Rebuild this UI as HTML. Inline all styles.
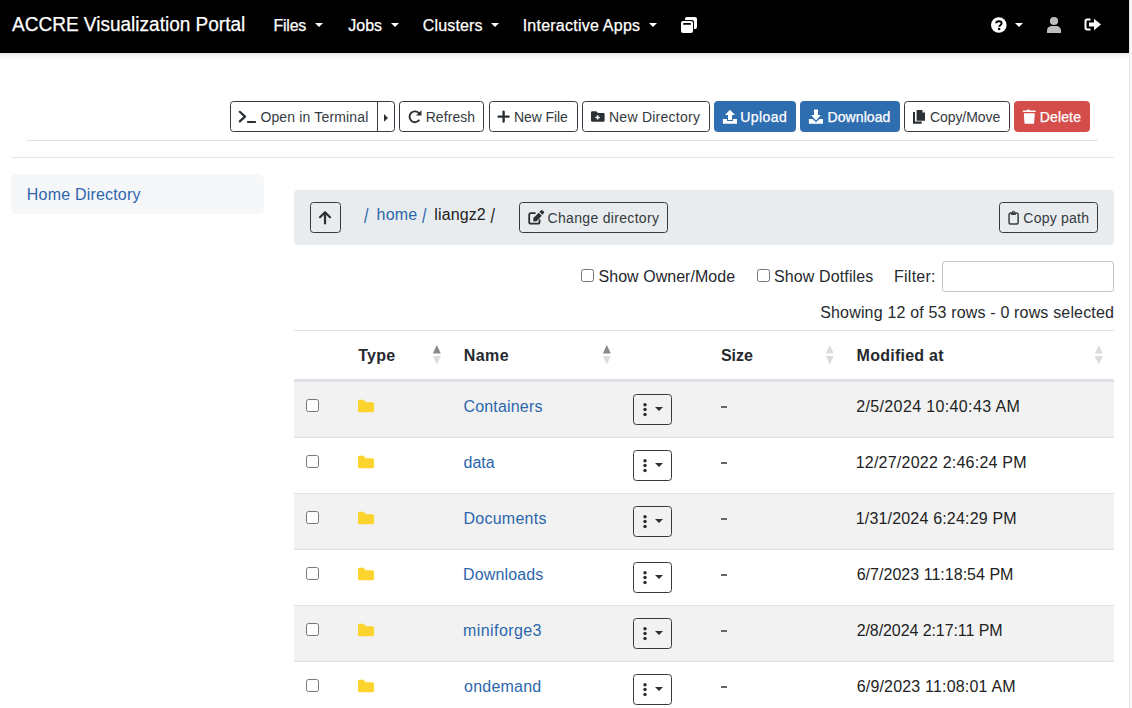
<!DOCTYPE html>
<html><head><meta charset="utf-8">
<style>
html,body{margin:0;padding:0;width:1132px;height:708px;overflow:hidden;background:#fff;font-family:"Liberation Sans",sans-serif;color:#26292d}
.a{position:absolute;white-space:nowrap}
#nav{position:absolute;left:0;top:0;width:1129px;height:53px;background:#000}
#shadow{position:absolute;left:0;top:53px;width:1129px;height:6px;background:linear-gradient(#ececec,#fff)}
#sb{position:absolute;left:1129px;top:0;width:3px;height:708px;background:#f7f7f7;border-left:1px solid #e6e6e6;box-sizing:border-box}
.caret{position:absolute;width:0;height:0;border-top:4.5px solid #fff;border-left:4px solid transparent;border-right:4px solid transparent}
.btn{position:absolute;box-sizing:border-box;height:31px;border:1px solid #343a40;border-radius:3.5px;top:101px}
.bp{background:#2f6db1;border-color:#2f6db1}
.bd{background:#d44d4a;border-color:#d44d4a}
.cb{position:absolute;box-sizing:border-box;width:13px;height:13px;border:1px solid #767676;border-radius:2.5px;background:#fff}
.row{position:absolute;left:294px;width:820px;height:55px}
.rb{position:absolute;left:294px;width:820px;height:1px;background:#dee2e6}
.dd{position:absolute;left:633px;width:39px;height:31px;box-sizing:border-box;border:1px solid #343a40;border-radius:3.5px}
svg{position:absolute;overflow:visible}
</style></head><body>
<div id="nav"></div>
<div id="shadow"></div>
<div id="sb"></div>
<div class="a" style="left:12.4px;top:14.07px;font-size:20px;line-height:20px;color:#fff;-webkit-text-stroke:0.25px #fff;transform:scaleX(0.951);transform-origin:0 0">ACCRE Visualization Portal</div>
<div class="a" id="files" style="left:273.50px;top:18.46px;font-size:16px;line-height:16px;letter-spacing:-0.250px;color:#fff;-webkit-text-stroke:0.25px #fff;">Files</div>
<div class="caret" style="left:314.8px;top:22.8px"></div>
<div class="a" id="jobs" style="left:348.30px;top:18.46px;font-size:16px;line-height:16px;color:#fff;-webkit-text-stroke:0.25px #fff;">Jobs</div>
<div class="caret" style="left:391px;top:22.8px"></div>
<div class="a" id="clusters" style="left:422.80px;top:18.46px;font-size:16px;line-height:16px;letter-spacing:0.143px;color:#fff;-webkit-text-stroke:0.25px #fff;">Clusters</div>
<div class="caret" style="left:491px;top:22.8px"></div>
<div class="a" id="apps" style="left:522.70px;top:18.46px;font-size:16px;line-height:16px;letter-spacing:0.233px;color:#fff;-webkit-text-stroke:0.25px #fff;">Interactive Apps</div>
<div class="caret" style="left:649px;top:22.8px"></div>
<svg style="left:680px;top:16px" width="18" height="18" viewBox="0 0 18 18">
  <rect x="5" y="1" width="12" height="12" rx="2" fill="#fff"/>
  <rect x="0" y="4" width="14" height="14" rx="2" fill="#000"/>
  <rect x="1" y="5" width="12" height="12" rx="2" fill="#fff"/>
  <rect x="3" y="7" width="8" height="1.8" rx="0.9" fill="#000"/>
</svg>
<svg style="left:991px;top:17px" width="16" height="16" viewBox="0 0 16 16">
  <circle cx="7.8" cy="8" r="7.8" fill="#fff"/>
  <path d="M5.2 6.2 C5.2 3.6 10.6 3.4 10.6 6.2 C10.6 8.2 8.2 8.2 8.2 9.8" stroke="#000" stroke-width="2" fill="none"/>
  <circle cx="8.1" cy="12" r="1.25" fill="#000"/>
</svg>
<div class="caret" style="left:1015px;top:23px"></div>
<svg style="left:1046px;top:16px" width="16" height="18" viewBox="0 0 16 18">
  <circle cx="8" cy="5" r="4.1" fill="#bdbdbd"/>
  <path d="M1 17 C0.5 12 2.5 10 6 10 L10 10 C13.5 10 15.5 12 15 17 Z" fill="#bdbdbd"/>
</svg>
<svg style="left:1084px;top:18px" width="18" height="14" viewBox="0 0 18 14">
  <path d="M6.5 1.5 H3.2 Q1.5 1.5 1.5 3.2 V9.8 Q1.5 11.5 3.2 11.5 H6.5" stroke="#fff" stroke-width="2" fill="none"/>
  <path d="M5 4.5 H10 V0.8 L17 6.5 L10 12.2 V8.5 H5 Z" fill="#fff"/>
</svg>
<div class="btn" style="left:230px;width:148px;border-top-right-radius:0;border-bottom-right-radius:0"></div>
<div class="btn" style="left:377px;width:18px;border-top-left-radius:0;border-bottom-left-radius:0"></div>
<svg style="left:237px;top:109px" width="22" height="16" viewBox="0 0 22 16">
  <path d="M2.8 2.8 L8 7.6 L2.8 12.4" stroke="#2b3035" stroke-width="2.2" fill="none" stroke-linecap="round" stroke-linejoin="round"/>
  <rect x="10" y="12" width="9" height="1.9" rx="0.6" fill="#2b3035"/>
</svg>
<svg style="left:383px;top:113px" width="6" height="10" viewBox="0 0 6 10"><path d="M1 1 L5 4.9 L1 8.8Z" fill="#2b3035"/></svg>
<div class="btn" style="left:399px;width:85px"></div>
<svg style="left:407px;top:109px" width="16" height="16" viewBox="0 0 16 16">
  <path d="M12.4 10.8 A5.4 5.4 0 1 1 12.3 4.6" stroke="#2b3035" stroke-width="1.9" fill="none"/>
  <path d="M14.5 1.2 V6.6 H9.1 Z" fill="#2b3035"/>
</svg>
<div class="btn" style="left:489px;width:89px"></div>
<svg style="left:497px;top:110px" width="14" height="14" viewBox="0 0 14 14">
  <path d="M6.6 1.6 V11.6 M1.6 6.6 H11.6" stroke="#2b3035" stroke-width="2.4" stroke-linecap="round"/>
</svg>
<div class="btn" style="left:582px;width:128px"></div>
<svg style="left:590px;top:110px" width="16" height="14" viewBox="0 0 16 14">
  <path d="M1 2.6 Q1 1.2 2.4 1.2 H6.2 L8 3 H13.4 Q14.6 3 14.6 4.3 V10.6 Q14.6 11.8 13.4 11.8 H2.4 Q1 11.8 1 10.5 Z" fill="#2b3035"/>
  <path d="M7.6 5.2 V9.6 M5.4 7.4 H9.8" stroke="#fff" stroke-width="1.5"/>
</svg>
<div class="btn bp" style="left:714px;width:82px"></div>
<svg style="left:722px;top:109px" width="16" height="16" viewBox="0 0 16 16">
  <path d="M3 6 L8 0.8 L13 6 H10 V11 H6 V6 Z" fill="#fff"/>
  <path d="M0.9 10 H5 V11.4 Q5 12 5.6 12 H10.4 Q11 12 11 11.4 V10 H15 V14.8 H0.9 Z" fill="#fff"/>
</svg>
<div class="btn bp" style="left:800px;width:100px"></div>
<svg style="left:808px;top:109px" width="16" height="16" viewBox="0 0 16 16">
  <path d="M6 0.6 H10 V6 H13 L8 11.6 L3 6 H6 Z" fill="#fff"/>
  <path d="M0.9 10 H4.6 L8 13.2 L11.4 10 H15 V14.8 H0.9 Z" fill="#fff"/>
</svg>
<div class="btn" style="left:904px;width:106px"></div>
<svg style="left:912px;top:109px" width="14" height="16" viewBox="0 0 14 16">
  <path d="M1 3 H3 V12.6 H9.7 V14.7 H1 Z" fill="#2b3035"/>
  <path d="M4.6 0.9 H10.4 L13 3.5 V11.8 H4.6 Z" fill="#2b3035"/>
  <path d="M10.4 0.9 V3.5 H13 Z" fill="#fff"/>
</svg>
<div class="btn bd" style="left:1014px;width:76px"></div>
<svg style="left:1022px;top:109px" width="14" height="16" viewBox="0 0 14 16">
  <path d="M0.9 1.5 H4.6 Q5.2 0.4 6.4 0.4 Q7.6 0.4 8.2 1.5 H13.6 V3 H0.9 Z" fill="#fff"/>
  <path d="M1.8 4.2 H12.8 L12.1 14.2 Q12 14.8 11.4 14.8 H3.2 Q2.6 14.8 2.5 14.2 Z" fill="#fff"/>
</svg>
<div class="a" id="term" style="left:260.40px;top:110.15px;font-size:14px;line-height:14px;letter-spacing:0.153px;color:#343a40;">Open in Terminal</div>
<div class="a" id="refresh" style="left:425.70px;top:110.15px;font-size:14px;line-height:14px;letter-spacing:0.067px;color:#343a40;">Refresh</div>
<div class="a" id="newfile" style="left:514.00px;top:110.15px;font-size:14px;line-height:14px;letter-spacing:-0.086px;color:#343a40;">New File</div>
<div class="a" id="newdir" style="left:609.00px;top:110.15px;font-size:14px;line-height:14px;letter-spacing:0.250px;color:#343a40;">New Directory</div>
<div class="a" id="upload" style="left:740.20px;top:110.15px;font-size:14px;line-height:14px;letter-spacing:0.460px;color:#fff;-webkit-text-stroke:0.25px #fff;">Upload</div>
<div class="a" id="download" style="left:827.50px;top:110.15px;font-size:14px;line-height:14px;letter-spacing:0.086px;color:#fff;-webkit-text-stroke:0.25px #fff;">Download</div>
<div class="a" id="copymove" style="left:929.90px;top:110.15px;font-size:14px;line-height:14px;letter-spacing:-0.050px;color:#343a40;">Copy/Move</div>
<div class="a" id="delete" style="left:1039.70px;top:110.15px;font-size:14px;line-height:14px;letter-spacing:0.160px;color:#fff;-webkit-text-stroke:0.25px #fff;">Delete</div>
<div style="position:absolute;left:27px;top:140px;width:1071px;height:1px;background:#dee2e6"></div>
<div style="position:absolute;left:11px;top:157px;width:1103px;height:1px;background:#e6e6e6"></div>
<div style="position:absolute;left:11px;top:174px;width:253px;height:40px;background:#f6f7f9;border-radius:5px"></div>
<div style="position:absolute;left:294px;top:190px;width:820px;height:55px;background:#e9ecef;border-radius:4px"></div>
<div class="btn" style="left:310px;top:202px;width:31px"></div>
<svg style="left:318px;top:210px" width="14" height="15" viewBox="0 0 14 15">
  <path d="M7 13.4 V2.6 M2 7.2 L7 2.2 L12 7.2" stroke="#2b3035" stroke-width="2.2" fill="none" stroke-linecap="round" stroke-linejoin="round"/>
</svg>
<div class="btn" style="left:519px;top:202px;width:149px"></div>
<svg style="left:527px;top:210px" width="18" height="16" viewBox="0 0 18 16">
  <path d="M8.6 3.2 H3.9 Q2.2 3.2 2.2 4.9 V12 Q2.2 13.7 3.9 13.7 H10.8 Q12.5 13.7 12.5 12 V9.2" stroke="#2b3035" stroke-width="1.8" fill="none"/>
  <path d="M6.2 11.4 L6.4 8.08 L11.69 2.76 L14.81 5.86 L9.52 11.18 Z" fill="#2b3035"/>
  <path d="M12.5 1.95 L14.16 0.28 Q14.9 -0.4 15.7 0.4 L16.8 1.5 Q17.6 2.3 16.9 3.05 L15.4 4.7 Z" fill="#2b3035"/>
</svg>
<div class="btn" style="left:999px;top:202px;width:99px"></div>
<svg style="left:1007px;top:210px" width="13" height="16" viewBox="0 0 13 16">
  <rect x="2.05" y="3.05" width="9.1" height="10.9" rx="1.8" stroke="#3a3f44" stroke-width="1.5" fill="none"/>
  <path d="M4 3.3 H8.8 V4.9 H4 Z" fill="#2b3035"/>
  <circle cx="6.4" cy="2.5" r="1.3" stroke="#2b3035" stroke-width="1" fill="none"/>
</svg>
<div class="a" id="home" style="left:26.80px;top:187.46px;font-size:16px;line-height:16px;letter-spacing:0.192px;color:#2c66ac;">Home Directory</div>
<div class="a" id="slash1" style="left:364.00px;top:207.26px;font-size:16px;line-height:16px;color:#2c66ac;"><span style="display:inline-block;transform:scaleY(1.25);transform-origin:0 2px">/</span></div>
<div class="a" id="homel" style="left:376.60px;top:207.26px;font-size:16px;line-height:16px;letter-spacing:0.200px;color:#2c66ac;">home <span style="display:inline-block;transform:scaleY(1.25);transform-origin:0 2px">/</span></div>
<div class="a" id="liangz" style="left:434.30px;top:207.26px;font-size:16px;line-height:16px;letter-spacing:0.125px;color:#222;">liangz2 <span style="display:inline-block;transform:scaleY(1.25);transform-origin:0 2px">/</span></div>
<div class="a" id="chdir" style="left:547.60px;top:211.15px;font-size:14px;line-height:14px;letter-spacing:0.313px;color:#343a40;">Change directory</div>
<div class="a" id="copypath" style="left:1023.30px;top:211.15px;font-size:14px;line-height:14px;letter-spacing:0.225px;color:#343a40;">Copy path</div>
<div class="cb" style="left:581px;top:269px"></div>
<div class="cb" style="left:757px;top:269px"></div>
<div class="a" id="owner" style="left:598.50px;top:268.76px;font-size:16px;line-height:16px;letter-spacing:0.036px;">Show Owner/Mode</div>
<div class="a" id="dot" style="left:774.00px;top:268.76px;font-size:16px;line-height:16px;letter-spacing:0.125px;">Show Dotfiles</div>
<div class="a" id="filter" style="left:894.00px;top:268.76px;font-size:16px;line-height:16px;letter-spacing:0.250px;">Filter:</div>
<div style="position:absolute;left:942px;top:261px;width:172px;height:31px;box-sizing:border-box;border:1px solid #c4c4cc;border-radius:3px;background:#fff"></div>
<div class="a" id="showing" style="left:820.20px;top:305.46px;font-size:16px;line-height:16px;letter-spacing:0.171px;">Showing 12 of 53 rows - 0 rows selected</div>
<div class="rb" style="top:330px"></div>
<div class="a" id="type" style="left:358.20px;top:348.46px;font-size:16px;line-height:16px;letter-spacing:0.267px;font-weight:bold;">Type</div>
<div class="a" id="name" style="left:463.80px;top:348.46px;font-size:16px;line-height:16px;letter-spacing:0.433px;font-weight:bold;">Name</div>
<div class="a" id="size" style="left:721.00px;top:348.46px;font-size:16px;line-height:16px;letter-spacing:-0.067px;font-weight:bold;">Size</div>
<div class="a" id="mod" style="left:856.60px;top:348.46px;font-size:16px;line-height:16px;letter-spacing:0.250px;font-weight:bold;">Modified at</div>
<svg style="left:432px;top:344px" width="10" height="22" viewBox="0 0 10 22"><path d="M0.8 9.5 L4.8 1 L8.8 9.5Z" fill="#8a8a8a"/><path d="M0.8 12 L4.8 20.5 L8.8 12Z" fill="#dcdcdc"/></svg>
<svg style="left:602px;top:344px" width="10" height="22" viewBox="0 0 10 22"><path d="M0.8 9.5 L4.8 1 L8.8 9.5Z" fill="#8a8a8a"/><path d="M0.8 12 L4.8 20.5 L8.8 12Z" fill="#dcdcdc"/></svg>
<svg style="left:825px;top:344px" width="10" height="22" viewBox="0 0 10 22"><path d="M0.8 9.5 L4.8 1 L8.8 9.5Z" fill="#dcdcdc"/><path d="M0.8 12 L4.8 20.5 L8.8 12Z" fill="#dcdcdc"/></svg>
<svg style="left:1094px;top:344px" width="10" height="22" viewBox="0 0 10 22"><path d="M0.8 9.5 L4.8 1 L8.8 9.5Z" fill="#dcdcdc"/><path d="M0.8 12 L4.8 20.5 L8.8 12Z" fill="#dcdcdc"/></svg>
<div style="position:absolute;left:294px;top:379px;width:820px;height:3px;background:#dde1e5"></div>
<div class="row" style="top:382px;background:#f2f2f2"></div>
<div class="rb" style="top:437px"></div>
<div class="cb" style="left:306px;top:399px"></div>
<svg style="left:357px;top:399px" width="18" height="14" viewBox="0 0 18 14"><path d="M1 2.3 Q1 0.8 2.5 0.8 H6.6 L8.8 3.2 H15.5 Q17 3.2 17 4.7 V11.7 Q17 13.2 15.5 13.2 H2.5 Q1 13.2 1 11.7 Z" fill="#fdd330"/></svg>
<div class="a" id="n0" style="left:463.50px;top:398.96px;font-size:16px;line-height:16px;letter-spacing:0.167px;color:#2c66ac;">Containers</div>
<div class="dd" style="top:394px"></div>
<svg style="left:642px;top:403px" width="24" height="14" viewBox="0 0 24 14"><circle cx="3" cy="1.8" r="1.75" fill="#2b3035"/><circle cx="3" cy="6.6" r="1.75" fill="#2b3035"/><circle cx="3" cy="11.4" r="1.75" fill="#2b3035"/><path d="M13 3.9 L21 3.9 L17 7.9Z" fill="#2b3035"/></svg>
<div style="position:absolute;left:721px;top:406px;width:6px;height:2px;background:#666"></div>
<div class="a" id="d0" style="left:856.20px;top:398.96px;font-size:16px;line-height:16px;letter-spacing:0.368px;color:#222;">2/5/2024 10:40:43 AM</div>
<div class="row" style="top:438px;background:#fff"></div>
<div class="rb" style="top:493px"></div>
<div class="cb" style="left:306px;top:455px"></div>
<svg style="left:357px;top:455px" width="18" height="14" viewBox="0 0 18 14"><path d="M1 2.3 Q1 0.8 2.5 0.8 H6.6 L8.8 3.2 H15.5 Q17 3.2 17 4.7 V11.7 Q17 13.2 15.5 13.2 H2.5 Q1 13.2 1 11.7 Z" fill="#fdd330"/></svg>
<div class="a" id="n1" style="left:463.50px;top:454.96px;font-size:16px;line-height:16px;letter-spacing:0.000px;color:#2c66ac;">data</div>
<div class="dd" style="top:450px"></div>
<svg style="left:642px;top:459px" width="24" height="14" viewBox="0 0 24 14"><circle cx="3" cy="1.8" r="1.75" fill="#2b3035"/><circle cx="3" cy="6.6" r="1.75" fill="#2b3035"/><circle cx="3" cy="11.4" r="1.75" fill="#2b3035"/><path d="M13 3.9 L21 3.9 L17 7.9Z" fill="#2b3035"/></svg>
<div style="position:absolute;left:721px;top:462px;width:6px;height:2px;background:#666"></div>
<div class="a" id="d1" style="left:855.70px;top:454.96px;font-size:16px;line-height:16px;letter-spacing:0.225px;color:#222;">12/27/2022 2:46:24 PM</div>
<div class="row" style="top:494px;background:#f2f2f2"></div>
<div class="rb" style="top:549px"></div>
<div class="cb" style="left:306px;top:511px"></div>
<svg style="left:357px;top:511px" width="18" height="14" viewBox="0 0 18 14"><path d="M1 2.3 Q1 0.8 2.5 0.8 H6.6 L8.8 3.2 H15.5 Q17 3.2 17 4.7 V11.7 Q17 13.2 15.5 13.2 H2.5 Q1 13.2 1 11.7 Z" fill="#fdd330"/></svg>
<div class="a" id="n2" style="left:463.50px;top:510.96px;font-size:16px;line-height:16px;letter-spacing:0.250px;color:#2c66ac;">Documents</div>
<div class="dd" style="top:506px"></div>
<svg style="left:642px;top:515px" width="24" height="14" viewBox="0 0 24 14"><circle cx="3" cy="1.8" r="1.75" fill="#2b3035"/><circle cx="3" cy="6.6" r="1.75" fill="#2b3035"/><circle cx="3" cy="11.4" r="1.75" fill="#2b3035"/><path d="M13 3.9 L21 3.9 L17 7.9Z" fill="#2b3035"/></svg>
<div style="position:absolute;left:721px;top:518px;width:6px;height:2px;background:#666"></div>
<div class="a" id="d2" style="left:855.70px;top:510.96px;font-size:16px;line-height:16px;letter-spacing:0.184px;color:#222;">1/31/2024 6:24:29 PM</div>
<div class="row" style="top:550px;background:#fff"></div>
<div class="rb" style="top:605px"></div>
<div class="cb" style="left:306px;top:567px"></div>
<svg style="left:357px;top:567px" width="18" height="14" viewBox="0 0 18 14"><path d="M1 2.3 Q1 0.8 2.5 0.8 H6.6 L8.8 3.2 H15.5 Q17 3.2 17 4.7 V11.7 Q17 13.2 15.5 13.2 H2.5 Q1 13.2 1 11.7 Z" fill="#fdd330"/></svg>
<div class="a" id="n3" style="left:463.00px;top:566.96px;font-size:16px;line-height:16px;letter-spacing:0.137px;color:#2c66ac;">Downloads</div>
<div class="dd" style="top:562px"></div>
<svg style="left:642px;top:571px" width="24" height="14" viewBox="0 0 24 14"><circle cx="3" cy="1.8" r="1.75" fill="#2b3035"/><circle cx="3" cy="6.6" r="1.75" fill="#2b3035"/><circle cx="3" cy="11.4" r="1.75" fill="#2b3035"/><path d="M13 3.9 L21 3.9 L17 7.9Z" fill="#2b3035"/></svg>
<div style="position:absolute;left:721px;top:574px;width:6px;height:2px;background:#666"></div>
<div class="a" id="d3" style="left:856.70px;top:566.96px;font-size:16px;line-height:16px;letter-spacing:0.026px;color:#222;">6/7/2023 11:18:54 PM</div>
<div class="row" style="top:606px;background:#f2f2f2"></div>
<div class="rb" style="top:661px"></div>
<div class="cb" style="left:306px;top:623px"></div>
<svg style="left:357px;top:623px" width="18" height="14" viewBox="0 0 18 14"><path d="M1 2.3 Q1 0.8 2.5 0.8 H6.6 L8.8 3.2 H15.5 Q17 3.2 17 4.7 V11.7 Q17 13.2 15.5 13.2 H2.5 Q1 13.2 1 11.7 Z" fill="#fdd330"/></svg>
<div class="a" id="n4" style="left:463.00px;top:622.96px;font-size:16px;line-height:16px;letter-spacing:0.422px;color:#2c66ac;">miniforge3</div>
<div class="dd" style="top:618px"></div>
<svg style="left:642px;top:627px" width="24" height="14" viewBox="0 0 24 14"><circle cx="3" cy="1.8" r="1.75" fill="#2b3035"/><circle cx="3" cy="6.6" r="1.75" fill="#2b3035"/><circle cx="3" cy="11.4" r="1.75" fill="#2b3035"/><path d="M13 3.9 L21 3.9 L17 7.9Z" fill="#2b3035"/></svg>
<div style="position:absolute;left:721px;top:630px;width:6px;height:2px;background:#666"></div>
<div class="a" id="d4" style="left:856.70px;top:622.96px;font-size:16px;line-height:16px;letter-spacing:-0.083px;color:#222;">2/8/2024 2:17:11 PM</div>
<div class="row" style="top:662px;background:#fff"></div>
<div class="rb" style="top:717px"></div>
<div class="cb" style="left:306px;top:679px"></div>
<svg style="left:357px;top:679px" width="18" height="14" viewBox="0 0 18 14"><path d="M1 2.3 Q1 0.8 2.5 0.8 H6.6 L8.8 3.2 H15.5 Q17 3.2 17 4.7 V11.7 Q17 13.2 15.5 13.2 H2.5 Q1 13.2 1 11.7 Z" fill="#fdd330"/></svg>
<div class="a" id="n5" style="left:464.00px;top:678.96px;font-size:16px;line-height:16px;letter-spacing:0.229px;color:#2c66ac;">ondemand</div>
<div class="dd" style="top:674px"></div>
<svg style="left:642px;top:683px" width="24" height="14" viewBox="0 0 24 14"><circle cx="3" cy="1.8" r="1.75" fill="#2b3035"/><circle cx="3" cy="6.6" r="1.75" fill="#2b3035"/><circle cx="3" cy="11.4" r="1.75" fill="#2b3035"/><path d="M13 3.9 L21 3.9 L17 7.9Z" fill="#2b3035"/></svg>
<div style="position:absolute;left:721px;top:686px;width:6px;height:2px;background:#666"></div>
<div class="a" id="d5" style="left:856.70px;top:678.96px;font-size:16px;line-height:16px;letter-spacing:0.184px;color:#222;">6/9/2023 11:08:01 AM</div>
<div class="row" style="top:718px;background:#f2f2f2"></div>
<div class="rb" style="top:773px"></div>
<div class="cb" style="left:306px;top:735px"></div>
<svg style="left:357px;top:735px" width="18" height="14" viewBox="0 0 18 14"><path d="M1 2.3 Q1 0.8 2.5 0.8 H6.6 L8.8 3.2 H15.5 Q17 3.2 17 4.7 V11.7 Q17 13.2 15.5 13.2 H2.5 Q1 13.2 1 11.7 Z" fill="#fdd330"/></svg>
<div class="a" id="n6" style="left:463.00px;top:734.96px;font-size:16px;line-height:16px;color:#2c66ac;">ood-test</div>
<div class="dd" style="top:730px"></div>
<svg style="left:642px;top:739px" width="24" height="14" viewBox="0 0 24 14"><circle cx="3" cy="1.8" r="1.75" fill="#2b3035"/><circle cx="3" cy="6.6" r="1.75" fill="#2b3035"/><circle cx="3" cy="11.4" r="1.75" fill="#2b3035"/><path d="M13 3.9 L21 3.9 L17 7.9Z" fill="#2b3035"/></svg>
<div style="position:absolute;left:721px;top:742px;width:6px;height:2px;background:#666"></div>
<div class="a" id="d6" style="left:855.70px;top:734.96px;font-size:16px;line-height:16px;color:#222;">1/1/2024 1:00:00 PM</div>
</body></html>
